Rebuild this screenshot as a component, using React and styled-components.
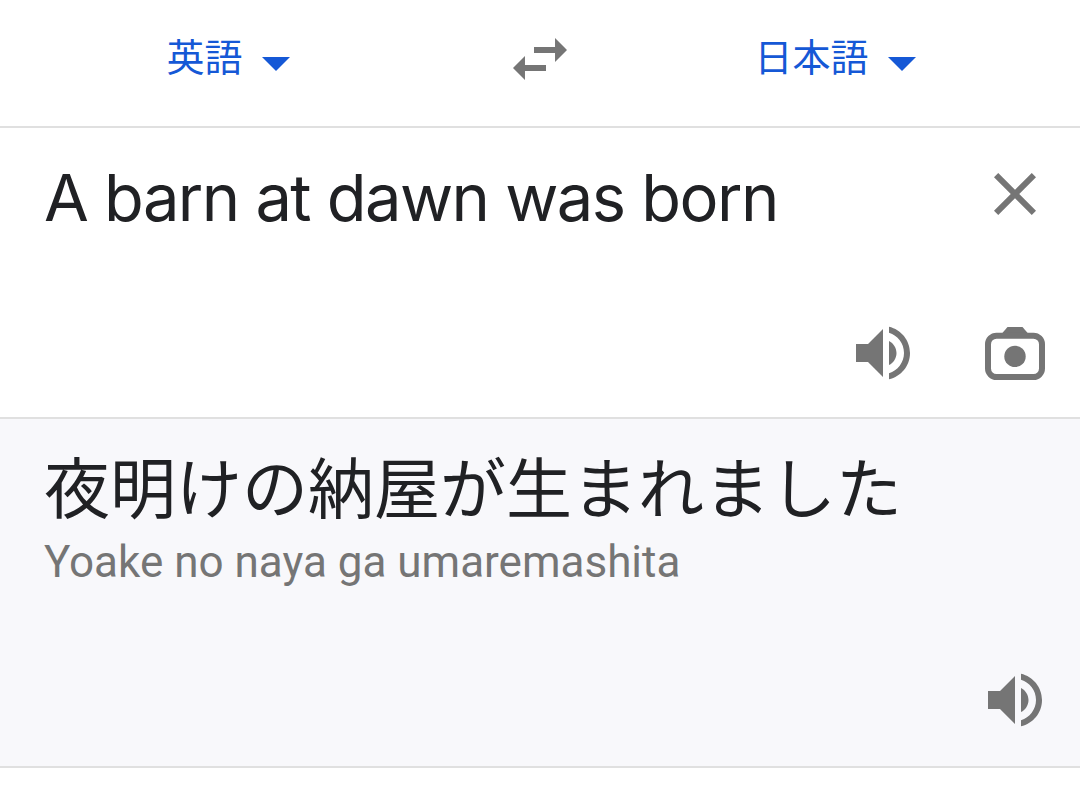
import React from 'react';
import styled, { createGlobalStyle } from 'styled-components';

const VolumeIcon = () => (
  <Icon viewBox="0 0 24 24">
    <path d="M3 9v6h4l5 5V4L7 9H3zm13.5 3c0-1.77-1.02-3.29-2.5-4.03v8.05c1.48-.73 2.5-2.25 2.5-4.02zM14 3.23v2.06c2.89.86 5 3.54 5 6.71s-2.11 5.85-5 6.71v2.06c4.01-.91 7-4.49 7-8.77s-2.99-7.86-7-8.77z" />
  </Icon>
);

const SwapIcon = () => (
  <Icon viewBox="0 0 24 24">
    <path d="M6.99 11L3 15l3.99 4v-3H14v-2H6.99v-3zM21 9l-3.99-4v3H10v2h7.01v3L21 9z" />
  </Icon>
);

const CloseIcon = () => (
  <Icon viewBox="0 0 24 24">
    <path d="M19 6.41L17.59 5 12 10.59 6.41 5 5 6.41 10.59 12 5 17.59 6.41 19 12 13.41 17.59 19 19 17.59 13.41 12z" />
  </Icon>
);

const CameraIcon = () => (
  <Icon viewBox="0 0 72 72">
    <path d="M22.5 17l6-7h15l6 7z" />
    <rect x="9" y="18.7" width="54" height="41.3" rx="8.5" fill="none" stroke="currentColor" strokeWidth="6" />
    <circle cx="36" cy="39.4" r="10.7" />
  </Icon>
);

const Caret = () => (
  <CaretSvg viewBox="0 0 28 14">
    <path d="M0 0h28L14 14z" />
  </CaretSvg>
);

export default function App() {
  return (
    <>
      <GlobalStyle />
      <Container>
        <Header>
          <Language $inset={18}>
            英語
            <Caret />
          </Language>
          <SwapButton aria-label="swap"><SwapIcon /></SwapButton>
          <Language $inset={16}>
            日本語
            <Caret />
          </Language>
        </Header>
        <SourcePanel>
          <TopRow>
            <SourceText>A barn at dawn was born</SourceText>
            <IconButton aria-label="clear"><CloseIcon /></IconButton>
          </TopRow>
          <Actions>
            <IconButton aria-label="listen"><VolumeIcon /></IconButton>
            <IconButton aria-label="camera"><CameraIcon /></IconButton>
          </Actions>
        </SourcePanel>
        <TargetPanel>
          <div>
            <TargetText lang="ja">夜明けの納屋が生まれました</TargetText>
            <Reading>Yoake no naya ga umaremashita</Reading>
          </div>
          <Actions>
            <IconButton aria-label="listen"><VolumeIcon /></IconButton>
          </Actions>
        </TargetPanel>
      </Container>
    </>
  );
}

const GlobalStyle = createGlobalStyle`
  * {
    box-sizing: border-box;
  }
  body {
    margin: 0;
    background: #fff;
    font-family: Roboto, 'Noto Sans CJK JP', sans-serif;
  }
`;

const Container = styled.div`
  display: flex;
  flex-direction: column;
  height: 790px;
  overflow: hidden;
`;

const Header = styled.div`
  display: grid;
  grid-template-columns: 1fr 132px 1fr;
  height: 128px;
  padding-bottom: 8px;
  border-bottom: 2px solid #e0e0e0;
`;

const Language = styled.div`
  display: flex;
  align-items: center;
  justify-content: center;
  gap: 19px;
  padding-right: ${({ $inset }) => $inset}px;
  padding-bottom: 10px;
  color: #1558d6;
  font-family: 'Noto Sans CJK JP', sans-serif;
  font-size: 38px;
`;

const CaretSvg = styled.svg`
  width: 28px;
  height: 14px;
  margin-top: 20px;
  fill: currentColor;
`;

const Icon = styled.svg`
  display: block;
  width: 72px;
  height: 72px;
  fill: currentColor;
`;

const IconButton = styled.button`
  flex: none;
  padding: 0;
  border: none;
  background: none;
  color: #757575;
`;

const SwapButton = styled(IconButton)`
  align-self: center;
  justify-self: center;
`;

const SourcePanel = styled.div`
  display: flex;
  flex-direction: column;
  justify-content: space-between;
  height: 291px;
  padding: 30px 29px 28px 44px;
  border-bottom: 2px solid #e0e0e0;
`;

const TargetPanel = styled(SourcePanel)`
  height: 349px;
  padding: 25px 29px 30px 44px;
  background: #f8f8fb;
`;

const TopRow = styled.div`
  display: flex;
  justify-content: space-between;
  align-items: flex-start;
`;

const SourceText = styled.div`
  color: #202124;
  font-family: Inter, sans-serif;
  font-size: 65px;
  line-height: 80px;
  letter-spacing: -1.55px;
  white-space: nowrap;
`;

const TargetText = styled.div`
  color: #202124;
  font-family: 'Noto Sans CJK JP', sans-serif;
  font-size: 66px;
  line-height: 80px;
  white-space: nowrap;
`;

const Reading = styled.div`
  margin-top: 6px;
  color: #757575;
  font-size: 44px;
  line-height: 64px;
  white-space: nowrap;
`;

const Actions = styled.div`
  display: flex;
  justify-content: flex-end;
  gap: 60px;
`;
